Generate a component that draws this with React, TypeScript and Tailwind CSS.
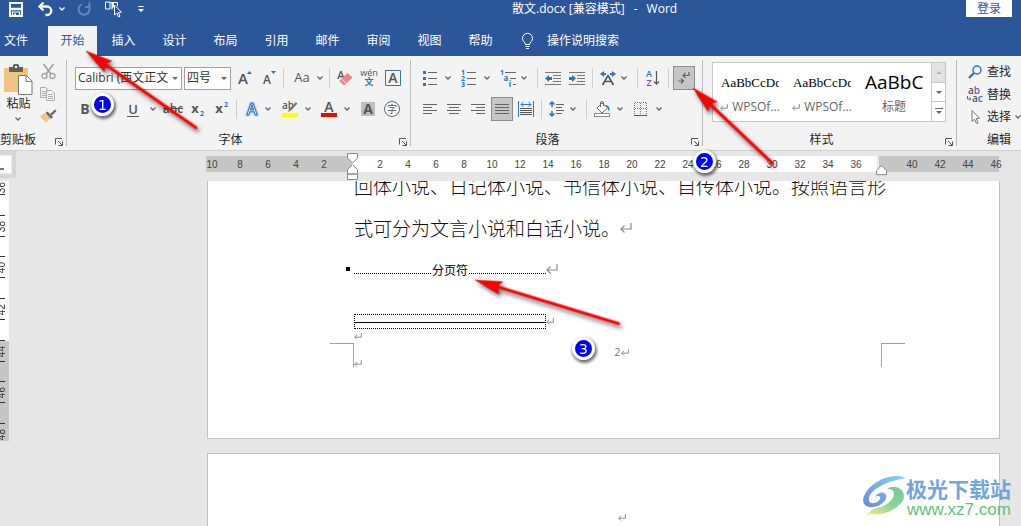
import React from "react";

type Kids = { children?: React.ReactNode };

const UI = "font-['Open_Sans','Noto_Sans_CJK_SC',sans-serif]";

function Ico({ w = 16, h = 16, crisp = false, children }: Kids & { w?: number; h?: number; crisp?: boolean }) {
  return (
    <svg
      width={w}
      height={h}
      viewBox={`0 0 ${w} ${h}`}
      fill="none"
      shapeRendering={crisp ? "crispEdges" : "auto"}
      className="block shrink-0 overflow-visible"
      aria-hidden="true"
    >
      {children}
    </svg>
  );
}

function Chevron() {
  return (
    <Ico w={6} h={4}>
      <path d="M.5 .5L3 3 5.500 .5" stroke="#666" strokeWidth="1.300" />
    </Ico>
  );
}

function Tool({ label, className = "w-6", children }: Kids & { label: string; className?: string }) {
  return (
    <button type="button" aria-label={label} className={`flex h-6 shrink-0 items-center justify-center ${className}`}>
      {children}
    </button>
  );
}

function Drop({ label, className = "w-3" }: { label: string; className?: string }) {
  return (
    <Tool label={label} className={className}>
      <Chevron />
    </Tool>
  );
}

function Sep({ className = "" }: { className?: string }) {
  return <span className={`h-5 w-px shrink-0 bg-[#d0d0d0] ${className}`} />;
}

function Launcher({ label }: { label: string }) {
  return (
    <button type="button" aria-label={label} className="absolute right-[3px] bottom-1">
      <Ico w={8} h={8}>
        <path d="M.5 6.500V.5H7M3 3l4 4M7.500 3.500v4h-4" stroke="#555" />
      </Ico>
    </button>
  );
}

function Group({ name, launcher, className, labelClass = "text-center", children }: Kids & { name: string; launcher?: boolean; className: string; labelClass?: string }) {
  return (
    <section aria-label={name} className={`flex ${className}`}>
      <div className="relative flex min-w-0 flex-1 flex-col">
        <div className="min-h-0 flex-1">{children}</div>
        <div className={`h-5 leading-5 whitespace-nowrap ${labelClass}`}>{name}</div>
        {launcher && <Launcher label={`${name}设置`} />}
      </div>
      <span className="mt-1 mb-1 w-px bg-[#b9b9b9]" />
    </section>
  );
}

function Letter({ x, y, size, fill = "#555", weight = 400, children }: Kids & { x: number; y: number; size: number; fill?: string; weight?: number }) {
  return (
    <text x={x} y={y} fontSize={size} fill={fill} fontWeight={weight} fontFamily="'Open Sans','Noto Sans CJK SC',sans-serif" textAnchor="middle">
      {children}
    </text>
  );
}

function ReturnMark({ small = false }: { small?: boolean }) {
  return (
    <svg width={small ? 8 : 12} height={small ? 7 : 10} viewBox="0 0 12 10" fill="none" className="block shrink-0" aria-hidden="true">
      <path d="M11 0v6H1.500M4.500 2.500L1 6l3.500 3.500" stroke="#8c8c8c" strokeWidth={small ? 1.500 : 1.200} />
    </svg>
  );
}

function TitleBar() {
  return (
    <header className="relative flex h-[26px] items-start text-white">
      <div className="flex h-[18px] items-center pl-[9px]">
        <button type="button" aria-label="保存" className="w-[29px]">
          <Ico w={15} h={15}>
            <path d="M1 1h12v13H1z" stroke="#fff" strokeWidth="2" />
            <path d="M1 7h12" stroke="#fff" strokeWidth="2.500" />
            <path d="M3.500 14v-4h7v4" stroke="#fff" strokeWidth="1.200" />
            <path d="M5 11.500h2V14H5z" fill="#fff" />
          </Ico>
        </button>
        <button type="button" aria-label="撤消" className="w-[21px]">
          <Ico w={15} h={14}>
            <path d="M5.500 .5L1.500 4.500l4 4M2 4.500h7a4 4 0 0 1 0 8.500H7.500" stroke="#fff" strokeWidth="2.300" />
          </Ico>
        </button>
        <button type="button" aria-label="撤消选项" className="w-[18px]">
          <Ico w={6} h={4}>
            <path d="M.5 .5L3 3 5.500 .5" stroke="#fff" strokeWidth="1.300" />
          </Ico>
        </button>
        <button type="button" aria-label="重复" className="w-7">
          <Ico w={14} h={14}>
            <path d="M5 2.200A5.500 5.500 0 1 0 11.500 4M8 5h4.500V.5" stroke="#6685b9" strokeWidth="2" />
          </Ico>
        </button>
        <button type="button" aria-label="触摸/鼠标模式" className="w-[33px]">
          <Ico w={16} h={16}>
            <path d="M.5 1h4.500v7H.5zM5.500 1.500H12.500V5M7 1.500v7" stroke="#fff" />
            <path d="M7 1.500h2v5h-2z" fill="#fff" />
            <path d="M9.500 4v10l2.300-2 1.700 4 1.500-.7-1.600-3.800 3-.3z" fill="#2b579a" stroke="#fff" />
          </Ico>
        </button>
        <button type="button" aria-label="自定义快速访问工具栏">
          <Ico w={6} h={7}>
            <path d="M.5 .5h5" stroke="#fff" />
            <path d="M0 3h6L3 6z" fill="#fff" />
          </Ico>
        </button>
      </div>
      <div className="ml-[368px] flex h-[18px] items-center gap-2 whitespace-nowrap">
        <span>散文.docx [兼容模式]</span>
        <span className="px-px">-</span>
        <span>Word</span>
      </div>
      <button type="button" className="mr-[9px] ml-auto h-[17px] w-[46px] bg-white leading-4 text-[#2b579a]">登录</button>
    </header>
  );
}

const tabs = ["开始", "插入", "设计", "布局", "引用", "邮件", "审阅", "视图", "帮助"];

function Tabs() {
  return (
    <nav className="flex h-[30px] items-stretch text-white">
      <button type="button" className="w-8">文件</button>
      <div className="ml-4 flex gap-0.5">
        {tabs.map((t, i) => (
          <button key={t} type="button" className={`w-[49px] ${i === 0 ? "bg-[#f3f3f3] text-[#2b579a]" : ""}`}>
            {t}
          </button>
        ))}
      </div>
      <button type="button" className="ml-[17px] flex items-center gap-[14px]">
        <Ico w={11} h={16}>
          <path d="M3.500 11.500c0-2-3-3-3-6.200a5 5 0 0 1 10 0c0 3.200-3 4.200-3 6.200zM3.500 13.500h4M4 15.500h3" stroke="#fff" />
        </Ico>
        <span>操作说明搜索</span>
      </button>
    </nav>
  );
}

function Clipboard() {
  return (
    <Group name="剪贴板" launcher className="w-[67px]" labelClass="text-left">
      <div className="flex pt-2 pl-1">
        <button type="button" className="flex w-[29px] flex-col">
          <Ico w={29} h={31}>
            <path d="M0 4h24v24H0z" fill="#eec583" />
            <path d="M5 8V3h4V1.500C9 .5 10 0 12 0s3 .5 3 1.500V3h4v5z" fill="#606060" />
            <path d="M11 2h2v2h-2z" fill="#fff" />
            <path d="M14.500 11.500h8l5.500 5.500v13.500h-13.500z" fill="#fff" stroke="#777" />
            <path d="M22 12v5.500h5.500" stroke="#777" />
          </Ico>
          <span className="leading-[18px]">粘贴</span>
          <span className="flex h-3 w-7 items-center justify-center"><Chevron /></span>
        </button>
        <div className="ml-1 -mt-1 flex flex-col">
          <Tool label="剪切" className="h-[23px] w-[22px]">
            <Ico w={15} h={16}>
              <path d="M2.500 0L10 10M12.500 0L5 10" stroke="#a5a5a5" strokeWidth="2" />
              <circle cx="3.500" cy="12" r="2.500" stroke="#a5a5a5" strokeWidth="1.400" />
              <circle cx="11.500" cy="12" r="2.500" stroke="#a5a5a5" strokeWidth="1.400" />
            </Ico>
          </Tool>
          <Tool label="复制" className="h-[22px] w-[22px]">
            <Ico w={16} h={14}>
              <path d="M.5 .5h5l3 3v7h-8zM2 4.500h4M2 6.500h4M2 8.500h4" stroke="#b0aab5" />
              <path d="M6.500 3.500h5l3 3v7h-8z" fill="#f3f3f3" stroke="#b0aab5" />
              <path d="M8 7.500h5M8 9.500h5M8 11.500h5" stroke="#b0aab5" />
            </Ico>
          </Tool>
          <Tool label="格式刷" className="h-[22px] w-[22px]">
            <Ico w={17} h={14}>
              <path d="M0 7l5-3 5 5.500L6 14z" fill="#eec583" />
              <path d="M5.500 4l2-1.500L13 8l-2 2z" fill="#666" />
              <path d="M10 5l5-4.500 1.500 1.500L12 6.500z" fill="#666" />
            </Ico>
          </Tool>
        </div>
      </div>
    </Group>
  );
}

function Combo({ label, value, className }: { label: string; value: string; className: string }) {
  return (
    <div className={`relative h-[23px] shrink-0 ${className}`}>
      <select aria-label={label} className="h-full w-full appearance-none overflow-hidden border border-[#a0a0a0] bg-white pr-[13px] pl-0.5 text-[#333]">
        <option>{value}</option>
      </select>
      <svg width="6" height="3" viewBox="0 0 6 3" className="pointer-events-none absolute top-[10px] right-1" aria-hidden="true">
        <path d="M0 0h6L3 3z" fill="#666" />
      </svg>
    </div>
  );
}

function FontGroup() {
  return (
    <Group name="字体" launcher className="w-[344px]" labelClass="text-center pr-4">
      <div className="flex items-center pt-[10px] pl-2">
        <Combo label="字体" value="Calibri (西文正文)" className="w-[107px]" />
        <Combo label="字号" value="四号" className="ml-0.5 w-[47px]" />
        <Tool label="增大字号" className="ml-0.5 w-6">
          <Ico>
            <Letter x={6} y={14} size={15} weight={600}>A</Letter>
            <path d="M10 4h5l-2.500-3z" fill="#2e75b6" />
          </Ico>
        </Tool>
        <Tool label="减小字号">
          <Ico>
            <Letter x={6} y={14} size={12} weight={600}>A</Letter>
            <path d="M10 1h5l-2.500 3z" fill="#2e75b6" />
          </Ico>
        </Tool>
        <Sep className="ml-0.5" />
        <Tool label="更改大小写" className="ml-1 w-10 gap-1">
          <Ico w={20}><Letter x={9} y={12} size={13}>Aa</Letter></Ico>
          <Chevron />
        </Tool>
        <Sep className="ml-px" />
        <Tool label="清除格式" className="ml-[3px] w-6">
          <Ico>
            <Letter x={4} y={9} size={11} weight={600}>A</Letter>
            <path d="M2 11l8.500-8 5 4.500-8.500 8z" fill="#e8838f" />
            <path d="M4.500 9l5 4.500" stroke="#f3f3f3" />
          </Ico>
        </Tool>
        <Tool label="拼音指南">
          <Ico>
            <Letter x={8} y={6} size={9}>wén</Letter>
            <Letter x={8} y={15} size={9} fill="#2e75b6" weight={700}>文</Letter>
          </Ico>
        </Tool>
        <Tool label="字符边框">
          <Ico>
            <path d="M.5 .5h15v15H.5z" stroke="#41719c" />
            <Letter x={8} y={13} size={14} weight={600}>A</Letter>
          </Ico>
        </Tool>
      </div>
      <div className="flex items-center pt-[7px] pl-1.5 text-[#555]">
        <Tool label="加粗"><b className="text-sm leading-4">B</b></Tool>
        <Tool label="倾斜"><i className="text-sm leading-4">I</i></Tool>
        <Tool label="下划线"><span className="border-b border-[#555] px-px text-[13px] leading-[14px] font-semibold">U</span></Tool>
        <Drop label="下划线选项" className="w-4" />
        <Tool label="删除线"><span className="text-xs leading-4 font-semibold line-through">abc</span></Tool>
        <Tool label="下标">
          <Ico><Letter x={6} y={12} size={13} weight={700}>x</Letter><Letter x={13} y={15} size={7} fill="#2e75b6" weight={700}>2</Letter></Ico>
        </Tool>
        <Tool label="上标">
          <Ico><Letter x={6} y={12} size={13} weight={700}>x</Letter><Letter x={13} y={6} size={7} fill="#2e75b6" weight={700}>2</Letter></Ico>
        </Tool>
        <Sep className="ml-[3px]" />
        <Tool label="文本效果" className="ml-[3px] w-6">
          <Ico>
            <text x="8" y="14" fontSize="16" fontWeight="600" fill="#fff" stroke="#2e75b6" strokeWidth="1" textAnchor="middle" fontFamily="'Open Sans',sans-serif" className="drop-shadow-[0_0_1px_#6ba3d8]">A</text>
          </Ico>
        </Tool>
        <Drop label="文本效果选项" className="w-2" />
        <Tool label="突出显示颜色" className="ml-1.5 w-6">
          <Ico>
            <Letter x={6} y={8} size={10} weight={600}>ab</Letter>
            <path d="M6 11l1-3 7-7 1.500 1.500-6.500 7z" fill="#777" />
            <path d="M0 12h16v4H0z" fill="#ff0" />
          </Ico>
        </Tool>
        <Drop label="突出显示选项" />
        <Tool label="字体颜色" className="ml-[3px] w-6">
          <Ico>
            <Letter x={8} y={11} size={14} weight={600}>A</Letter>
            <path d="M0 12h16v4H0z" fill="#f00" />
          </Ico>
        </Tool>
        <Drop label="字体颜色选项" />
        <Tool label="字符底纹" className="ml-[3px] w-6">
          <Ico>
            <path d="M1 1h14v14H1z" fill="#bdbdbd" />
            <Letter x={8} y={13} size={14} weight={700}>A</Letter>
          </Ico>
        </Tool>
        <Tool label="带圈字符">
          <Ico>
            <circle cx="8" cy="8" r="7.500" fill="#fff" stroke="#666" />
            <Letter x={8} y={11.500} size={10}>字</Letter>
          </Ico>
        </Tool>
      </div>
    </Group>
  );
}

function Paragraph() {
  return (
    <Group name="段落" launcher className="w-[292px]" labelClass="text-center pr-[18px]">
      <div className="flex items-center pt-[10px] pl-[7px]">
        <Tool label="项目符号">
          <Ico w={14}>
            <path d="M0 1h3v3H0zM0 7h3v3H0zM0 13h3v3H0z" fill="#2e75b6" />
            <path d="M5 2.500h9M5 8.500h9M5 14.500h9" stroke="#666" />
          </Ico>
        </Tool>
        <Drop label="项目符号库" />
        <Tool label="编号" className="ml-[3px] w-6">
          <Ico>
            <Letter x={2} y={5} size={7} fill="#2e75b6" weight={700}>1</Letter>
            <Letter x={2} y={11} size={7} fill="#2e75b6" weight={700}>2</Letter>
            <Letter x={2} y={17} size={7} fill="#2e75b6" weight={700}>3</Letter>
            <path d="M6 2.500h9M6 8.500h9M6 14.500h9" stroke="#666" />
          </Ico>
        </Tool>
        <Drop label="编号库" />
        <Tool label="多级列表" className="ml-[3px] w-6">
          <Ico>
            <Letter x={2} y={5} size={7} fill="#2e75b6" weight={700}>1</Letter>
            <Letter x={6} y={11} size={8} fill="#2e75b6" weight={700}>a</Letter>
            <Letter x={10} y={17} size={8} fill="#2e75b6" weight={700}>i</Letter>
            <path d="M5 2.500h11M10 8.500h6M13 14.500h3" stroke="#666" />
          </Ico>
        </Tool>
        <Drop label="多级列表库" className="w-2" />
        <Sep className="ml-[9px]" />
        <Tool label="减少缩进量" className="ml-[3px] w-6">
          <Ico>
            <path d="M0 2.500h16M8 5.500h8M8 8.500h8M8 11.500h8M0 14.500h16" stroke="#777" />
            <path d="M0 8.500L4 5v2h3v3H4v2z" fill="#2e75b6" />
          </Ico>
        </Tool>
        <Tool label="增加缩进量">
          <Ico>
            <path d="M0 2.500h16M8 5.500h8M8 8.500h8M8 11.500h8M0 14.500h16" stroke="#777" />
            <path d="M7 8.500L3 5v2H0v3h3v2z" fill="#2e75b6" />
          </Ico>
        </Tool>
        <Sep className="ml-[3px]" />
        <Tool label="中文版式" className="ml-[3px] w-6">
          <Ico>
            <path d="M0 4l4-3v2h2v2H4v2zM16 4l-4-3v2h-2v2h2v2z" fill="#2e75b6" />
            <path d="M2.500 15L8 5.500 13.500 15M5 11.500h6" stroke="#555" strokeWidth="1.600" />
          </Ico>
        </Tool>
        <Drop label="中文版式选项" className="w-2" />
        <Sep className="ml-[9px]" />
        <Tool label="排序" className="ml-[3px] w-6">
          <Ico>
            <Letter x={4} y={7} size={9} fill="#2e75b6" weight={600}>A</Letter>
            <Letter x={4} y={16} size={9} fill="#8a4bb0" weight={600}>Z</Letter>
            <path d="M11.500 1v13M9 11.500l2.500 2.700 2.500-2.700" stroke="#555" strokeWidth="1.200" />
          </Ico>
        </Tool>
        <Sep className="ml-[3px]" />
        <Tool label="显示/隐藏编辑标记" className="ml-1 w-[22px] border border-[#8c8c8c] bg-[#c6c6c6]">
          <Ico w={12} h={14}>
            <path d="M11 1v3.500H5M7.500 2L5 4.500 7.500 7M0 10h5M3 7.500L5.500 10 3 12.500" stroke="#666" strokeWidth="1.200" />
          </Ico>
        </Tool>
      </div>
      <div className="flex items-center pt-[7px] pl-[7px]">
        <Tool label="左对齐"><Ico w={14} h={12}><path d="M0 1.500h14M0 4.500h9M0 7.500h14M0 10.500h9" stroke="#666" /></Ico></Tool>
        <Tool label="居中"><Ico w={14} h={12}><path d="M0 1.500h14M2 4.500h10M0 7.500h14M2 10.500h10" stroke="#666" /></Ico></Tool>
        <Tool label="右对齐"><Ico w={14} h={12}><path d="M0 1.500h14M5 4.500h9M0 7.500h14M5 10.500h9" stroke="#666" /></Ico></Tool>
        <Tool label="两端对齐" className="ml-px w-[22px] border border-[#8c8c8c] bg-[#c6c6c6]">
          <Ico w={14} h={12}><path d="M0 1.500h14M0 4.500h14M0 7.500h14M0 10.500h14" stroke="#666" /></Ico>
        </Tool>
        <Tool label="分散对齐" className="ml-px w-6">
          <Ico>
            <path d="M.5 0v16M15.500 0v16M3 3.500h10M5.500 1L3 3.500 5.500 6M10.500 1L13 3.500 10.500 6" stroke="#2e75b6" />
            <path d="M2 7.500h12M2 9.500h12M2 11.500h12M2 13.500h12" stroke="#555" />
          </Ico>
        </Tool>
        <Sep className="ml-[3px]" />
        <Tool label="行和段落间距" className="ml-[3px] w-6">
          <Ico>
            <path d="M3 1v5M.5 3.500L3 1l2.500 2.500M3 15v-5M.5 12.500L3 15l2.500-2.500" stroke="#2e75b6" strokeWidth="1.500" />
            <path d="M7 3.500h8M7 6.500h6M7 9.500h8M7 12.500h6" stroke="#666" />
          </Ico>
        </Tool>
        <Drop label="间距选项" className="w-2" />
        <Sep className="ml-[9px]" />
        <Tool label="底纹" className="ml-[3px] w-6">
          <Ico>
            <path d="M3 7l5-5 5.500 5-5.500 5z" fill="#fff" stroke="#666" />
            <path d="M6.500 6V2a1.500 1.500 0 0 1 3 0v3" stroke="#666" />
            <path d="M11 4c3 0 5 2 4.500 6-2 0-1-3-2.500-4z" fill="#2e75b6" />
            <path d="M.5 12.500h15v3H.5z" fill="#fff" stroke="#888" />
          </Ico>
        </Tool>
        <Drop label="底纹选项" />
        <Tool label="边框" className="ml-[3px] w-6">
          <Ico w={14} h={14} crisp>
            <path d="M1 .5h12M1 6.500h12M.5 1v12M6.500 1v12M12.500 1v12" stroke="#777" strokeDasharray="1 1" />
            <path d="M0 13.500h13" stroke="#555" />
          </Ico>
        </Tool>
        <Drop label="边框选项" />
      </div>
    </Group>
  );
}

function StyleCard({ sample, name, serif = false }: { sample: string; name: string; serif?: boolean }) {
  return (
    <button type="button" className="flex w-[72px] shrink-0 flex-col items-center pt-2">
      <span className={`flex h-6 w-[58px] items-center whitespace-nowrap text-black ${serif ? "overflow-hidden font-['Liberation_Serif',serif] text-[13px]" : "text-[19px]"}`}>
        {sample}
      </span>
      <span className="flex h-6 items-center gap-1 text-[#666]">
        {serif && <ReturnMark small />}
        {name}
      </span>
    </button>
  );
}

function Styles() {
  return (
    <Group name="样式" launcher className="min-w-0 flex-1" labelClass="text-center pr-4">
      <div className="mt-1.5 mr-[10px] ml-[9px] flex h-[60px] border border-[#c6c6c6] bg-white">
        <div className="flex min-w-0 flex-1 overflow-hidden pl-px">
          <StyleCard sample="AaBbCcDd" name="WPSOf..." serif />
          <StyleCard sample="AaBbCcDd" name="WPSOf..." serif />
          <StyleCard sample="AaBbC" name="标题" />
        </div>
        <div className="flex w-[14px] flex-col border-l border-[#c6c6c6]">
          <button type="button" aria-label="上一行" className="flex flex-1 items-center justify-center bg-[#e3e3e3]">
            <Ico w={6} h={3}><path d="M0 3h6L3 0z" fill="#b5b5b5" /></Ico>
          </button>
          <button type="button" aria-label="下一行" className="flex flex-1 items-center justify-center border-y border-[#c6c6c6]">
            <Ico w={6} h={3}><path d="M0 0h6L3 3z" fill="#666" /></Ico>
          </button>
          <button type="button" aria-label="其他样式" className="flex flex-1 items-center justify-center">
            <Ico w={8} h={7}><path d="M0 .5h8" stroke="#666" /><path d="M1 3h6L4 6z" fill="#666" /></Ico>
          </button>
        </div>
      </div>
    </Group>
  );
}

function Editing() {
  return (
    <section aria-label="编辑" className="flex w-16 flex-col overflow-hidden pl-[10px] whitespace-nowrap">
      <div className="flex-1 pt-1">
        <button type="button" className="flex h-[23px] items-center gap-1">
          <Ico>
            <circle cx="10" cy="6" r="4" stroke="#2e75b6" strokeWidth="1.500" />
            <path d="M7 9l-5 5" stroke="#2e75b6" strokeWidth="2.400" />
          </Ico>
          查找
        </button>
        <button type="button" className="flex h-[23px] items-center gap-1">
          <Ico>
            <text x="1" y="7" fontSize="10" fontWeight="600" fill="#555" fontFamily="'Open Sans',sans-serif">
              a<tspan fill="#8a4bb0">b</tspan>
            </text>
            <text x="5" y="15" fontSize="10" fontWeight="600" fill="#555" fontFamily="'Open Sans',sans-serif">
              a<tspan fill="#2e75b6">c</tspan>
            </text>
            <path d="M.5 9v3H4M2.500 10.500L4 12l-1.500 1.500" stroke="#2e75b6" />
          </Ico>
          替换
        </button>
        <button type="button" className="flex h-[22px] items-center gap-1">
          <Ico>
            <path d="M5 1.500v11l2.500-2.300 2 4.300 1.700-.8-2-4.200 3.300-.3z" fill="#fff" stroke="#777" />
          </Ico>
          选择
          <Chevron />
        </button>
      </div>
      <div className="h-5 pl-5 leading-5">编辑</div>
    </section>
  );
}

const range = (from: number, to: number) => Array.from({ length: (to - from) / 2 + 1 }, (_, i) => from + i * 2);

function Ticks({ values }: { values: number[] }) {
  return (
    <>
      {values.map((n) => (
        <span key={n} className="w-7 shrink-0 text-center">{n}</span>
      ))}
    </>
  );
}

function Ruler() {
  return (
    <div className="flex h-[30px] items-start">
      <div className="flex h-[27px] w-4 items-center bg-[#d6d6d6] pr-1">
        <button type="button" aria-label="制表符类型" className="flex h-[19px] w-full items-center border-y border-r border-[#ececec] bg-[#fdfdfd]">
          <span className="mt-2 h-0.5 w-1 bg-[#777]" />
        </button>
      </div>
      <div className="mt-[5px] mr-[22px] ml-[190px] flex h-4 flex-1 font-['Liberation_Sans',sans-serif] text-[10px] leading-[17px] text-[#444]">
        <div className="flex w-[146px] shrink-0 justify-end bg-[#c6c6c6] pr-[14px]">
          <Ticks values={[10, 8, 6, 4, 2]} />
        </div>
        <div className="relative flex min-w-0 flex-1 bg-white pl-[14px]">
          <Ticks values={range(2, 36)} />
          <svg width="12" height="28" viewBox="0 0 12 28" className="absolute -top-[3px] -left-[5px]" aria-hidden="true">
            <path d="M.5 .5h10v4.500l-5 5-5-5zM5.500 11.500l5 5v4.500H.5v-4.500zM.5 21h10v5.500H.5z" fill="#fff" stroke="#888" />
          </svg>
          <svg width="12" height="11" viewBox="0 0 12 11" className="absolute top-[9px] -right-[11px]" aria-hidden="true">
            <path d="M5.500 .7l5 5v4H.5v-4z" fill="#fff" stroke="#888" />
          </svg>
        </div>
        <div className="ml-0.5 flex w-[120px] shrink-0 bg-[#c6c6c6] pl-[19px]">
          <Ticks values={range(40, 46)} />
        </div>
      </div>
    </div>
  );
}

const vertical = ["", "38", "", "40", "", "42", "", "44", "", "46", "", "48"];

function VCell({ text, grey, className }: { text: string; grey?: boolean; className: string }) {
  return (
    <div className={`relative flex w-[9px] items-center justify-start ${grey ? "bg-[#c6c6c6]" : "bg-white"} ${className}`}>
      <span className="-ml-[3px] rotate-180 [writing-mode:vertical-rl]">{text}</span>
      <span className="absolute bottom-0 left-0 h-px w-[5px] bg-[#333]" />
    </div>
  );
}

function VerticalRuler() {
  return (
    <div className="h-[260px] w-[9px] shrink-0 overflow-hidden font-['Liberation_Sans',sans-serif] text-[10px] leading-[10px] text-[#333]">
      <VCell text="36" className="h-[14px]" />
      <div className="flex h-[250px] flex-col">
        {vertical.map((t, i) => (
          <VCell key={i} text={t} grey={i > 6} className="flex-1" />
        ))}
      </div>
    </div>
  );
}

function DocumentArea() {
  return (
    <main className="flex min-h-0 flex-1 overflow-hidden">
      <VerticalRuler />
      <div className="mr-[21px] ml-[198px] flex min-w-0 flex-1 flex-col">
        <article className="shrink-0 overflow-hidden border-x border-b border-[#c2c2c2] bg-white pb-[71px]">
          <div className="-mt-4 pl-[146px] font-['Noto_Sans_CJK_SC',sans-serif] text-[19px] leading-[42px] font-light whitespace-nowrap text-[#111]">
            <p>回体小说、日记体小说、书信体小说、自传体小说。按照语言形</p>
            <p className="flex items-center">式可分为文言小说和白话小说。<ReturnMark /></p>
          </div>
          <div className="flex h-11 items-center pl-[138px] text-black">
            <span className="mr-1 mb-1 h-1 w-1 bg-black" />
            <span className="mt-1 w-[77px] border-b border-dotted border-black" />
            <span className="px-px leading-4">分页符</span>
            <span className="mt-1 w-[77px] border-b border-dotted border-black" />
            <span className="pb-1"><ReturnMark /></span>
          </div>
          <div className="mt-[21px] flex h-[15px] items-center pl-[146px]">
            <div className="flex h-full w-[192px] items-center border border-dotted border-black">
              <span className="mt-0.5 h-px w-full bg-black" />
            </div>
            <ReturnMark small />
          </div>
          <div className="flex h-[14px] items-center pl-[146px]"><ReturnMark small /></div>
          <div className="flex h-6 justify-between pr-[94px] pl-[122px]">
            <div className="flex items-end">
              <span className="h-6 w-6 border-t border-r border-[#a0a0a0]" />
              <ReturnMark small />
            </div>
            <div className="flex h-[18px] items-center text-[11px] text-[#777]">2<ReturnMark small /></div>
            <span className="h-6 w-6 border-t border-l border-[#a0a0a0]" />
          </div>
        </article>
        <article className="mt-[14px] flex flex-1 justify-center border-x border-t border-[#c2c2c2] bg-white pt-[60px] pl-9">
          <ReturnMark small />
        </article>
      </div>
    </main>
  );
}

function Arrow({ x, y, angle, length }: { x: number; y: number; angle: number; length: number }) {
  return (
    <g transform={`translate(${x} ${y}) rotate(${angle})`}>
      <path d={`M22 0H${length}`} stroke="#f00" strokeWidth="3.200" strokeLinecap="round" />
      <path d="M0 0L27-6.500 23 0l4 6.500z" fill="#f00" stroke="#a00" strokeWidth=".4" />
    </g>
  );
}

function Badge({ n, className }: { n: number; className: string }) {
  return (
    <span className={`absolute flex h-[23px] w-[23px] items-center justify-center rounded-full border-[3px] border-white bg-[#0000f5] font-['DejaVu_Sans',sans-serif] text-sm leading-4 text-white shadow-[1px_2px_3px_1px_rgba(0,0,0,0.55)] ${className}`}>
      {n}
    </span>
  );
}

function Annotations() {
  return (
    <>
      <svg className="pointer-events-none absolute inset-0 h-full w-full" fill="none" aria-hidden="true">
        <g className="drop-shadow-[2px_3px_2px_rgba(0,0,0,0.6)]">
          <Arrow x={86} y={51} angle={34.900} length={134} />
          <Arrow x={693} y={88} angle={43.500} length={109} />
          <Arrow x={475} y={280} angle={16.900} length={150} />
        </g>
      </svg>
      <Badge n={1} className="top-[93px] left-[91px]" />
      <Badge n={2} className="top-[150px] left-[693px]" />
      <Badge n={3} className="top-[337px] left-[572px]" />
    </>
  );
}

function Watermark() {
  return (
    <div className="absolute top-[475px] right-[10px] flex items-start font-['Noto_Sans_CJK_SC',sans-serif] whitespace-nowrap">
      <svg width="43" height="42" viewBox="0 0 43 42" fill="none" aria-hidden="true">
        <defs>
          <linearGradient id="wm-blue" x1="0" y1="1" x2="1" y2="0">
            <stop stopColor="#6c86d6" />
            <stop offset="1" stopColor="#86d6f8" />
          </linearGradient>
          <linearGradient id="wm-green" x1="0" y1="1" x2="1" y2="0">
            <stop stopColor="#f3f080" />
            <stop offset=".5" stopColor="#8fd494" />
            <stop offset="1" stopColor="#70c99b" />
          </linearGradient>
        </defs>
        <path d="M43 3C39 1 35 1 32 1 20 2 6 9 1 21c-3 8 2 12 9 11 9-1 15-8 13-12-2-4-8-3-11 2 3-2 6-1 5 2-2 4-9 6-11 2C4 18 18 7 43 3z" fill="url(#wm-blue)" />
        <path d="M24 14c7-1 9 5 5 10-4 6-12 9-19 10l-7 6 6-1c8 1 15-1 20-4 10-5 14-12 11-18-3-5-11-7-16-3z" fill="url(#wm-green)" />
      </svg>
      <div>
        <div className="text-[21px] leading-[26px] font-bold text-[#72a5dc]">极光下载站</div>
        <div className="pl-px font-['Liberation_Sans',sans-serif] text-[17px] leading-[18px] text-[#5fc17a]">www.xz7.com</div>
      </div>
    </div>
  );
}

export default function App() {
  return (
    <div className={`relative flex h-screen flex-col overflow-hidden bg-[#e6e6e6] text-xs text-[#262626] ${UI}`}>
      <div className="shrink-0 bg-[#2b579a]">
        <TitleBar />
        <Tabs />
      </div>
      <div className="flex h-[95px] shrink-0 border-b border-[#cfcfcf] bg-[#f3f3f3]">
        <Clipboard />
        <FontGroup />
        <Paragraph />
        <Styles />
        <Editing />
      </div>
      <Ruler />
      <DocumentArea />
      <Annotations />
      <Watermark />
    </div>
  );
}
